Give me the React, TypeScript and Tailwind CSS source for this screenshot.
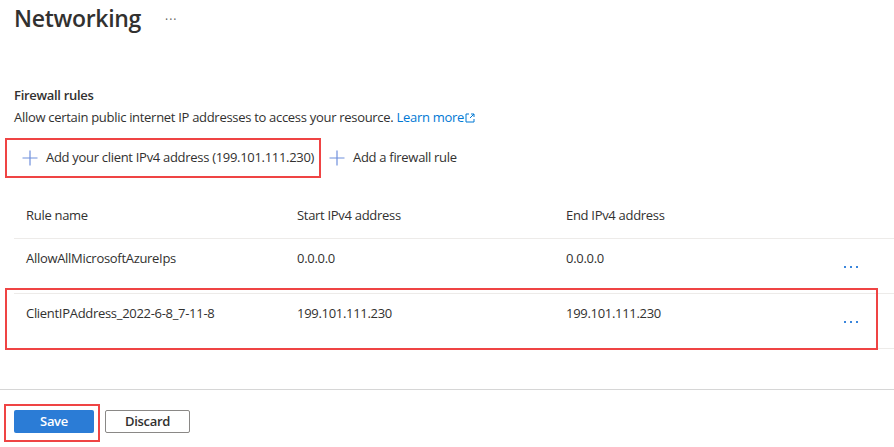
import React from 'react';

const rules = [
    { name: 'AllowAllMicrosoftAzureIps', start: '0.0.0.0', end: '0.0.0.0' },
    { name: 'ClientIPAddress_2022-6-8_7-11-8', start: '199.101.111.230', end: '199.101.111.230' },
];

const PlusIcon: React.FC = () => (
    <svg width="16" height="16" viewBox="0 0 16 16" fill="none">
        <path d="M8 0.5V15.5M0.5 8H15.5" stroke="#6f8fdc" strokeWidth="1.2" />
    </svg>
);

const Dots: React.FC = () => (
    <div className="flex gap-[4px]">
        <span className="w-[2px] h-[2px] bg-[#3a86dc]" />
        <span className="w-[2px] h-[2px] bg-[#3a86dc]" />
        <span className="w-[2px] h-[2px] bg-[#3a86dc]" />
    </div>
);

export default function App() {
    return (
        <div className="w-[894px] h-[447px] bg-white text-[#323130] overflow-hidden tracking-[-0.3px] font-['Segoe_UI','Open_Sans',sans-serif]">
            <div className="flex items-center h-[36px] pl-[14px]">
                <h1 className="text-[23px] leading-[32px] font-semibold">Networking</h1>
                <span className="ml-[24px] text-[12px] mt-[4px] text-[#605e5c] tracking-[1px]">···</span>
            </div>

            <div className="pl-[14px] mt-[49px]">
                <h2 className="text-[13px] leading-[20px] font-semibold">Firewall rules</h2>
                <p className="text-[13px] leading-[20px] mt-[2px]">
                    Allow certain public internet IP addresses to access your resource.{' '}
                    <a className="text-[#0078d4]">
                        Learn more
                        <svg className="inline-block ml-[1px] -mt-[2px]" width="10" height="10" viewBox="0 0 10 10" fill="none">
                            <path d="M4 1H1V9H9V6M6 1H9V4M9 1L5 5" stroke="#0078d4" strokeWidth="1" />
                        </svg>
                    </a>
                </p>
            </div>

            <div className="flex items-center mt-[11px] pl-[5px] text-[13px] whitespace-nowrap">
                <div className="border-2 border-[#ef4444] h-[40px] w-[316px] flex items-center pl-[15px]">
                    <PlusIcon />
                    <span className="ml-[8px]">Add your client IPv4 address (199.101.111.230)</span>
                </div>
                <div className="flex items-center ml-[8px]">
                    <PlusIcon />
                    <span className="ml-[8px]">Add a firewall rule</span>
                </div>
            </div>

            <div className="relative ml-[14px] mt-[20px] text-[13px]">
                <div className="grid grid-cols-[271px_269px_1fr] h-[41px] items-center pl-[12px] pb-[4px] border-b border-[#edebe9]">
                    <span>Rule name</span>
                    <span>Start IPv4 address</span>
                    <span>End IPv4 address</span>
                </div>
                {rules.map((r) => (
                    <div key={r.name} className="grid grid-cols-[271px_269px_1fr_50px] h-[55px] pl-[12px] border-b border-[#edebe9]">
                        <span className="pt-[10px]">{r.name}</span>
                        <span className="pt-[10px]">{r.start}</span>
                        <span className="pt-[10px]">{r.end}</span>
                        <div className="pt-[27px]"><Dots /></div>
                    </div>
                ))}
                <div className="absolute left-[-9px] top-[90px] w-[873px] h-[62px] border-2 border-[#ef4444] pointer-events-none" />
            </div>

            <div className="mt-[40px] border-t border-[#d6d6d6] pl-[4px] pt-[14px]">
                <div className="flex items-start">
                    <div className="border-2 border-[#ef4444] pt-[4px] pb-[7px] pl-[8px] pr-[4px]">
                        <button className="block w-[80px] h-[23px] rounded-[2px] bg-[#2b7cd6] text-white text-[13px] font-semibold">Save</button>
                    </div>
                    <button className="ml-[5px] mt-[6px] w-[85px] h-[23px] rounded-[2px] border border-[#8a8886] text-[13px] font-semibold">Discard</button>
                </div>
            </div>
        </div>
    );
}
